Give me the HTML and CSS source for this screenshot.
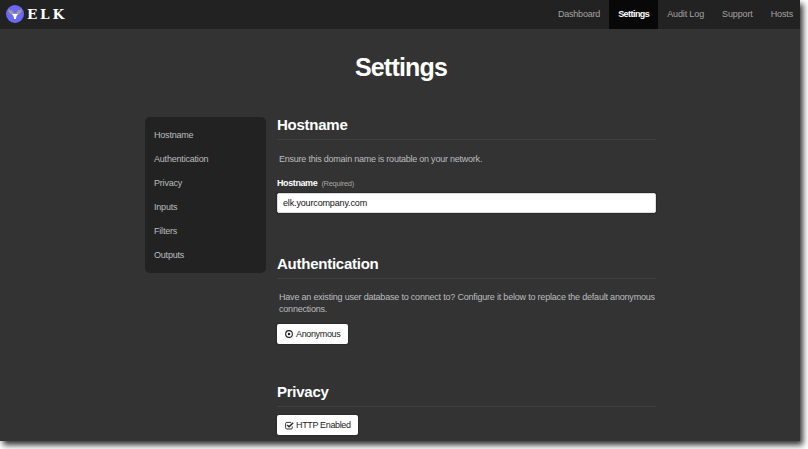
FILE: index.html
```html
<!DOCTYPE html>
<html lang="en">
<head>
<meta charset="utf-8">
<title>Settings</title>
<link rel="stylesheet" href="styles.css">
</head>
<body>
<div class="window">
  <header class="navbar">
    <a class="brand">
      <svg class="logo" viewBox="0 0 18 18" width="18" height="18">
        <circle cx="9" cy="9" r="9" fill="#6868f4"/>
        <path d="M3 4.5Q2.8 8 7.4 9.4M15 4.5Q15.2 8 10.6 9.4M5.8 5.2Q5.2 7.2 7.6 8.6M12.2 5.2Q12.8 7.2 10.4 8.6M4.2 5.6L5.8 8M13.8 5.6L12.2 8" fill="none" stroke="#a39a91" stroke-width="1.5"/>
        <path d="M5.8 9.5 L8 8.8 H10 L12.2 9.5 L10.6 10.8 L9.9 14 H8.1 L7.4 10.8Z" fill="#fff"/>
      </svg>
      <span class="wordmark">ELK</span>
    </a>
    <nav class="menu">
      <a>Dashboard</a>
      <a class="active">Settings</a>
      <a>Audit Log</a>
      <a>Support</a>
      <a>Hosts</a>
    </nav>
  </header>
  <h1>Settings</h1>
  <div class="layout">
    <aside class="sidebar">
      <a>Hostname</a>
      <a>Authentication</a>
      <a>Privacy</a>
      <a>Inputs</a>
      <a>Filters</a>
      <a>Outputs</a>
    </aside>
    <main>
      <section class="hostname">
        <h2>Hostname</h2>
        <p>Ensure this domain name is routable on your network.</p>
        <label for="host">Hostname <small>(Required)</small></label>
        <input id="host" type="text" value="elk.yourcompany.com">
      </section>
      <section class="auth">
        <h2>Authentication</h2>
        <p>Have an existing user database to connect to? Configure it below to replace the default anonymous<br>connections.</p>
        <button class="btn">
          <svg viewBox="0 0 9 9" width="8" height="8"><circle cx="4.5" cy="4.5" r="3.8" fill="none" stroke="#222" stroke-width="1.2"/><circle cx="4.5" cy="4.5" r="1.4" fill="#222"/></svg>
          <span>Anonymous</span>
        </button>
      </section>
      <section class="privacy">
        <h2>Privacy</h2>
        <button class="btn http">
          <svg viewBox="0 0 9 9" width="9" height="9"><path d="M7.3 5.3V6.8Q7.3 8 6.1 8H1.8Q.6 8 .6 6.8V2.6Q.6 1.4 1.8 1.4H6.2" fill="none" stroke="#222" stroke-width=".9"/><path d="M2.2 4 L4.1 5.8 L8.2 1.7" fill="none" stroke="#222" stroke-width="1.4"/></svg>
          <span>HTTP Enabled</span>
        </button>
      </section>
    </main>
  </div>
</div>
</body>
</html>
```

FILE: styles.css
```css
* { box-sizing: border-box; }
body {
  margin: 0;
  height: 449px;
  overflow: hidden;
  background: #fff;
  font: 9px/12px "Liberation Sans", Arial, sans-serif;
  letter-spacing: -.2px;
  color: #babdbf;
}
.window {
  width: 800px;
  height: 441px;
  background: #333;
  box-shadow: 3px 4px 6px rgba(0, 0, 0, .8);
}
.navbar {
  display: flex;
  justify-content: space-between;
  height: 29px;
  background: #222;
}
.brand { display: flex; align-items: center; padding-left: 6px; }
.logo { flex: none; margin-top: -1px; }
.wordmark {
  margin: -2px 0 0 3px;
  font: bold 13.5px/18px "DejaVu Serif", serif;
  letter-spacing: 2.8px;
  color: #fff;
}
.menu { display: flex; line-height: 28px; color: #a3a3a3; }
.menu a { padding: 0 9px; }
.menu .active {
  width: 49px;
  background: #080808;
  color: #fff;
  font-weight: bold;
  letter-spacing: -.55px;
}
.menu a:nth-child(n+3) { letter-spacing: -.13px; }
.menu a:last-child { padding-right: 7px; }
h1 {
  margin: 20px 0 0;
  padding-left: 2px;
  text-align: center;
  font-size: 25px;
  line-height: 36px;
  letter-spacing: -.8px;
  color: #fff;
}
.layout { display: flex; gap: 11px; margin: 32px 0 0 145px; }
.sidebar {
  display: flex;
  flex-direction: column;
  width: 121px;
  height: 156px;
  padding: 6px 9px;
  border-radius: 5px;
  background: #222;
  line-height: 24px;
}
main { width: 379px; }
h2 {
  margin: 0;
  height: 23px;
  border-bottom: 1px solid #404040;
  font-size: 15px;
  line-height: 16px;
  letter-spacing: -.25px;
  color: #fff;
}
p { margin: 13px 0 0 2px; white-space: nowrap; }
label {
  display: block;
  margin-top: 12px;
  font-weight: bold;
  letter-spacing: -.4px;
  color: #fff;
}
small { margin-left: 2px; font-size: 7.5px; font-weight: normal; color: #a3a3a3; letter-spacing: -.3px; }
input {
  display: block;
  width: 379px;
  height: 20px;
  margin-top: 3px;
  padding: 0 5px;
  border: 1px solid #ddd;
  border-radius: 2px;
  background: #fff;
  font: inherit;
  letter-spacing: -.15px;
  color: #111;
  box-shadow: 0 0 1px 1px #292929;
}
.hostname { height: 139px; }
.hostname p { letter-spacing: -.23px; }
.auth { height: 128px; }
.auth p { margin-top: 12px; }
.btn {
  display: flex;
  align-items: center;
  gap: 3px;
  width: 71px;
  height: 20px;
  margin-top: 8px;
  padding: 0 0 0 8px;
  border: 0;
  border-radius: 2px;
  background: #fff;
  font: inherit;
  letter-spacing: -.35px;
  color: #222;
  white-space: nowrap;
  box-shadow: 0 0 1px 1px #2b2b2b;
}
.auth .btn { margin-top: 9px; }
.http { width: 81px; gap: 2px; }
```
